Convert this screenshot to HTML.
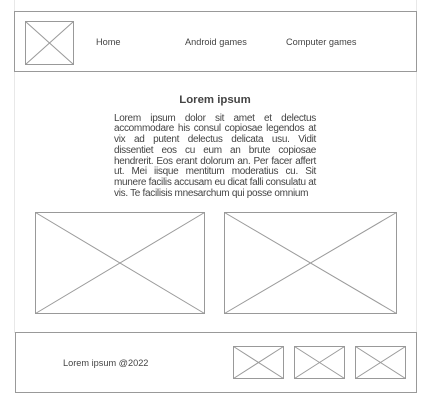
<!DOCTYPE html>
<html><head><meta charset="utf-8"><style>
html,body{margin:0;padding:0;background:#fff;}
body{width:435px;height:408px;position:relative;overflow:hidden;font-family:"Liberation Sans",Arial,sans-serif;color:#444;}
svg{position:absolute;left:0;top:0;}
.t{position:absolute;white-space:nowrap;font-size:9.2px;color:#444;}
.p{position:absolute;left:114px;top:113.5px;width:202px;font-size:10px;letter-spacing:-0.3px;line-height:10.8px;color:#444;}
.p div{text-align:justify;text-align-last:justify;white-space:nowrap;}
.p div.l{text-align-last:left;}
</style></head><body>
<svg width="435" height="408" viewBox="0 0 435 408" fill="none" stroke-width="1">
<line x1="14.5" y1="0" x2="14.5" y2="333" stroke="#e8e8e8"/>
<line x1="416.5" y1="0" x2="416.5" y2="333" stroke="#e8e8e8"/>
<rect x="14.5" y="11.5" width="402" height="60" fill="#fff" stroke="#999"/>
<g stroke="#999"><rect x="25.5" y="21.5" width="48" height="43"/><line x1="25.5" y1="21.5" x2="73.5" y2="64.5"/><line x1="73.5" y1="21.5" x2="25.5" y2="64.5"/></g>
<g stroke="#999"><rect x="35.5" y="212.5" width="169" height="101"/><line x1="35.5" y1="212.5" x2="204.5" y2="313.5"/><line x1="204.5" y1="212.5" x2="35.5" y2="313.5"/></g>
<g stroke="#999"><rect x="224.5" y="212.5" width="172" height="101"/><line x1="224.5" y1="212.5" x2="396.5" y2="313.5"/><line x1="396.5" y1="212.5" x2="224.5" y2="313.5"/></g>
<rect x="15.5" y="332.5" width="401" height="60" fill="#fff" stroke="#999"/>
<g stroke="#999"><rect x="233.5" y="346.5" width="50" height="32"/><line x1="233.5" y1="346.5" x2="283.5" y2="378.5"/><line x1="283.5" y1="346.5" x2="233.5" y2="378.5"/></g>
<g stroke="#999"><rect x="294.5" y="346.5" width="50" height="32"/><line x1="294.5" y1="346.5" x2="344.5" y2="378.5"/><line x1="344.5" y1="346.5" x2="294.5" y2="378.5"/></g>
<g stroke="#999"><rect x="355.5" y="346.5" width="50" height="32"/><line x1="355.5" y1="346.5" x2="405.5" y2="378.5"/><line x1="405.5" y1="346.5" x2="355.5" y2="378.5"/></g>
</svg>
<div class="t" style="left:96px;top:37px;">Home</div>
<div class="t" style="left:185px;top:37px;">Android games</div>
<div class="t" style="left:286px;top:37px;">Computer games</div>
<div class="t" style="left:0;width:430px;text-align:center;top:93.5px;font-size:11.4px;font-weight:bold;color:#444;">Lorem ipsum</div>
<div class="p">
<div>Lorem ipsum dolor sit amet et delectus</div>
<div>accommodare his consul copiosae legendos at</div>
<div>vix ad putent delectus delicata usu. Vidit</div>
<div>dissentiet eos cu eum an brute copiosae</div>
<div>hendrerit. Eos erant dolorum an. Per facer affert</div>
<div>ut. Mei iisque mentitum moderatius cu. Sit</div>
<div>munere facilis accusam eu dicat falli consulatu at</div>
<div class="l">vis. Te facilisis mnesarchum qui posse omnium</div>
</div>
<div class="t" style="left:63px;top:358px;">Lorem ipsum @2022</div>
</body></html>
